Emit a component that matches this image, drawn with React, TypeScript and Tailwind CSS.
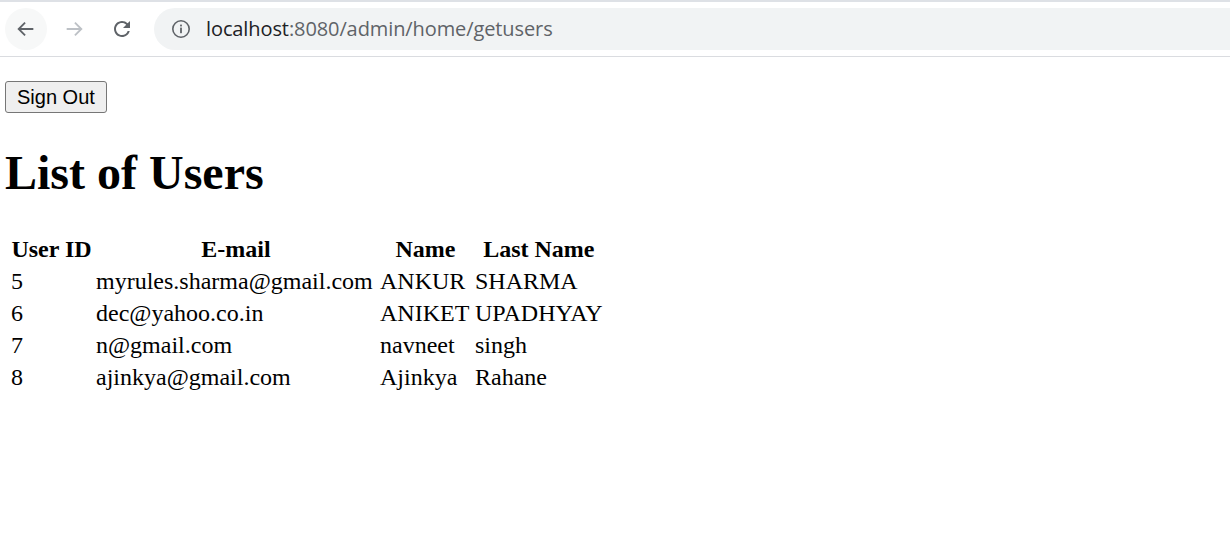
import React from "react";

const users = [
  { id: "5", email: "myrules.sharma@gmail.com", name: "ANKUR", last: "SHARMA" },
  { id: "6", email: "dec@yahoo.co.in", name: "ANIKET", last: "UPADHYAY" },
  { id: "7", email: "n@gmail.com", name: "navneet", last: "singh" },
  { id: "8", email: "ajinkya@gmail.com", name: "Ajinkya", last: "Rahane" },
];

export default function App() {
  return (
    <div className="w-[1230px] h-[547px] bg-white overflow-hidden">
      {/* browser chrome */}
      <div className="h-[2px] bg-[#dee1e6]" />
      <div className="h-[55px] flex items-center border-b border-[#dadce0] bg-white">
        <div className="ml-[5px] w-[42px] h-[42px] rounded-full bg-[#f7f8f8] flex items-center justify-center">
          <svg width="22" height="22" viewBox="0 0 24 24" fill="none" stroke="#5f6368" strokeWidth="2">
            <path d="M20 12H5M11 5l-7 7 7 7" />
          </svg>
        </div>
        <div className="ml-[6px] w-[42px] h-[42px] flex items-center justify-center">
          <svg width="22" height="22" viewBox="0 0 24 24" fill="none" stroke="#bdc1c6" strokeWidth="2">
            <path d="M4 12h15M13 5l7 7-7 7" />
          </svg>
        </div>
        <div className="ml-[6px] w-[42px] h-[42px] flex items-center justify-center">
          <svg width="24" height="24" viewBox="0 0 24 24">
            <path
              d="M17.65 6.35A7.958 7.958 0 0 0 12 4c-4.42 0-7.99 3.58-7.99 8s3.57 8 7.99 8c3.73 0 6.84-2.55 7.73-6h-2.08A5.99 5.99 0 0 1 12 18c-3.31 0-6-2.69-6-6s2.69-6 6-6c1.66 0 3.14.69 4.22 1.78L13 11h7V4l-2.35 2.35z"
              fill="#5f6368"
            />
          </svg>
        </div>
        <div className="ml-[11px] flex-1 h-[42px] rounded-l-full bg-[#f1f3f4] flex items-center">
          <div className="ml-[17px] w-[20px] h-[20px] flex items-center justify-center">
            <svg width="20" height="20" viewBox="0 0 20 20" fill="none">
              <circle cx="10" cy="10" r="8.2" stroke="#5f6368" strokeWidth="1.6" />
              <rect x="9.1" y="8.6" width="1.8" height="5.6" fill="#5f6368" />
              <rect x="9.1" y="5.6" width="1.8" height="1.8" fill="#5f6368" />
            </svg>
          </div>
          <div className="ml-[15px] text-[20px] font-['Open_Sans',sans-serif] tracking-[-0.1px] leading-none">
            <span className="text-[#202124]">localhost</span>
            <span className="text-[#5f6368]">:8080/admin/home/getusers</span>
          </div>
        </div>
      </div>

      {/* page content */}
      <div className="pl-[5px] font-['Liberation_Serif',serif] text-black">
        <button className="mt-[24px] h-[32px] px-[11px] bg-[#efefef] border border-[#767676] rounded-[3px] text-[20px] leading-none font-['Liberation_Sans',sans-serif] text-black">
          Sign Out
        </button>
        <h1 className="mt-[32px] text-[48px] font-bold leading-[55px]">List of Users</h1>
        <table className="mt-[32px] ml-[3px] border-separate border-spacing-[2px] text-[24px] leading-[28px] whitespace-nowrap">
          <thead>
            <tr>
              <th className="p-[1px] w-[83px] font-bold text-center">User ID</th>
              <th className="p-[1px] w-[282px] font-bold text-center">E-mail</th>
              <th className="p-[1px] w-[93px] font-bold text-center">Name</th>
              <th className="p-[1px] w-[128px] font-bold text-center">Last Name</th>
            </tr>
          </thead>
          <tbody>
            {users.map((u) => (
              <tr key={u.id}>
                <td className="p-[1px]">{u.id}</td>
                <td className="p-[1px]">{u.email}</td>
                <td className="p-[1px]">{u.name}</td>
                <td className="p-[1px]">{u.last}</td>
              </tr>
            ))}
          </tbody>
        </table>
      </div>
    </div>
  );
}
